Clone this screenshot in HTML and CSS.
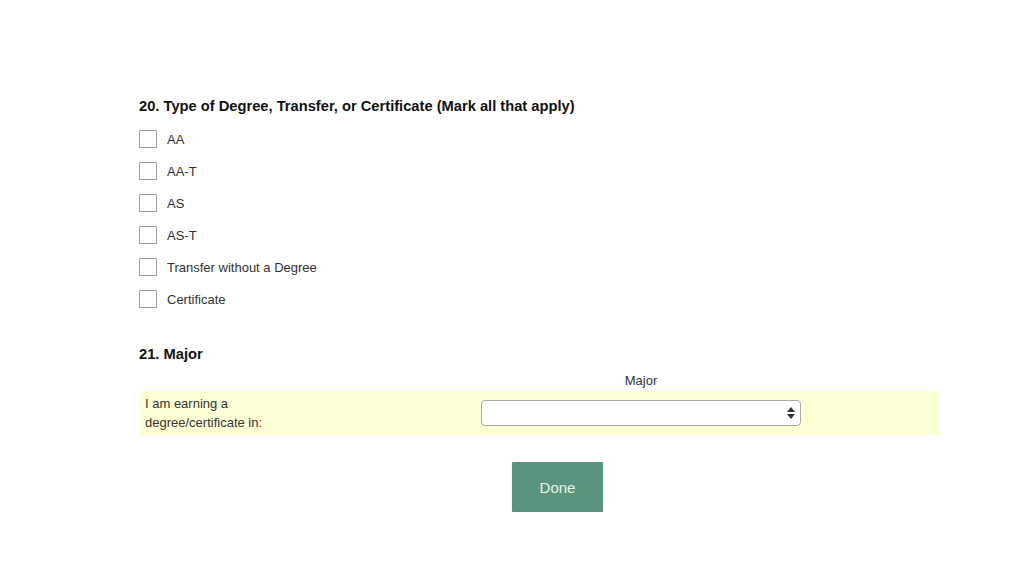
FILE: index.html
```html
<!DOCTYPE html>
<html lang="en">
<head>
    <meta charset="UTF-8">
    <title>Degree and Major</title>
    <link rel="stylesheet" href="styles.css">
</head>
<body>
    <div class="form">
        <h2 class="question">20. Type of Degree, Transfer, or Certificate (Mark all that apply)</h2>
        <div class="options">
            <label class="option"><span class="box"></span>AA</label>
            <label class="option"><span class="box"></span>AA-T</label>
            <label class="option"><span class="box"></span>AS</label>
            <label class="option"><span class="box"></span>AS-T</label>
            <label class="option"><span class="box"></span>Transfer without a Degree</label>
            <label class="option"><span class="box"></span>Certificate</label>
        </div>

        <h2 class="question major-q">21. Major</h2>
        <div class="major-grid">
            <div></div>
            <div class="col-head">Major</div>
            <div></div>
        </div>
        <div class="major-grid major-row">
            <div class="row-label">I am earning a<br>degree/certificate in:</div>
            <div class="select">
                <svg class="arrows" width="10" height="16" viewBox="0 0 10 16">
                    <path d="M1 7 L5 2 L9 7 Z" fill="#333"/>
                    <path d="M1 9 L5 14 L9 9 Z" fill="#333"/>
                </svg>
            </div>
            <div></div>
        </div>

        <button class="done">Done</button>
    </div>
</body>
</html>
```

FILE: styles.css
```css
body {
    margin: 0;
    background: #fff;
    font-family: "Liberation Sans", Arial, sans-serif;
    color: #222;
}

.form {
    width: 801px;
    padding: 96px 0 0 139px;
}

.question {
    margin: 0;
    font-size: 14.7px;
    line-height: 20px;
    font-weight: bold;
    color: #111;
}

.options {
    margin-top: 7px;
}

.option {
    display: flex;
    align-items: center;
    height: 32px;
    font-size: 13px;
    color: #333;
}

.box {
    width: 16px;
    height: 16px;
    border: 1px solid #999;
    border-radius: 1px;
    background: #fff;
    margin-right: 10px;
}

.major-q {
    margin-top: 29px;
}

.major-grid {
    display: grid;
    grid-template-columns: 342px 320px 1fr;
}

.col-head {
    margin-top: 9px;
    text-align: center;
    font-size: 13px;
    line-height: 16px;
    color: #333;
}

.major-row {
    margin-top: 2px;
    height: 44px;
    align-items: center;
    background: #ffffd6;
}

.row-label {
    padding-left: 6px;
    font-size: 13px;
    line-height: 19px;
    color: #333;
}

.select {
    position: relative;
    height: 24px;
    border: 1px solid #a9a9a9;
    border-radius: 4px;
    background: #fff;
}

.arrows {
    position: absolute;
    right: 4px;
    top: 4px;
}

.done {
    display: block;
    margin: 27px 0 0 373px;
    width: 91px;
    height: 50px;
    border: none;
    border-radius: 1px;
    background: #5a947a;
    color: #e4f4ea;
    font-family: "Liberation Sans", Arial, sans-serif;
    font-size: 15px;
    box-shadow: 0 2px 2px rgba(0,0,0,0.15);
    cursor: pointer;
}
```
